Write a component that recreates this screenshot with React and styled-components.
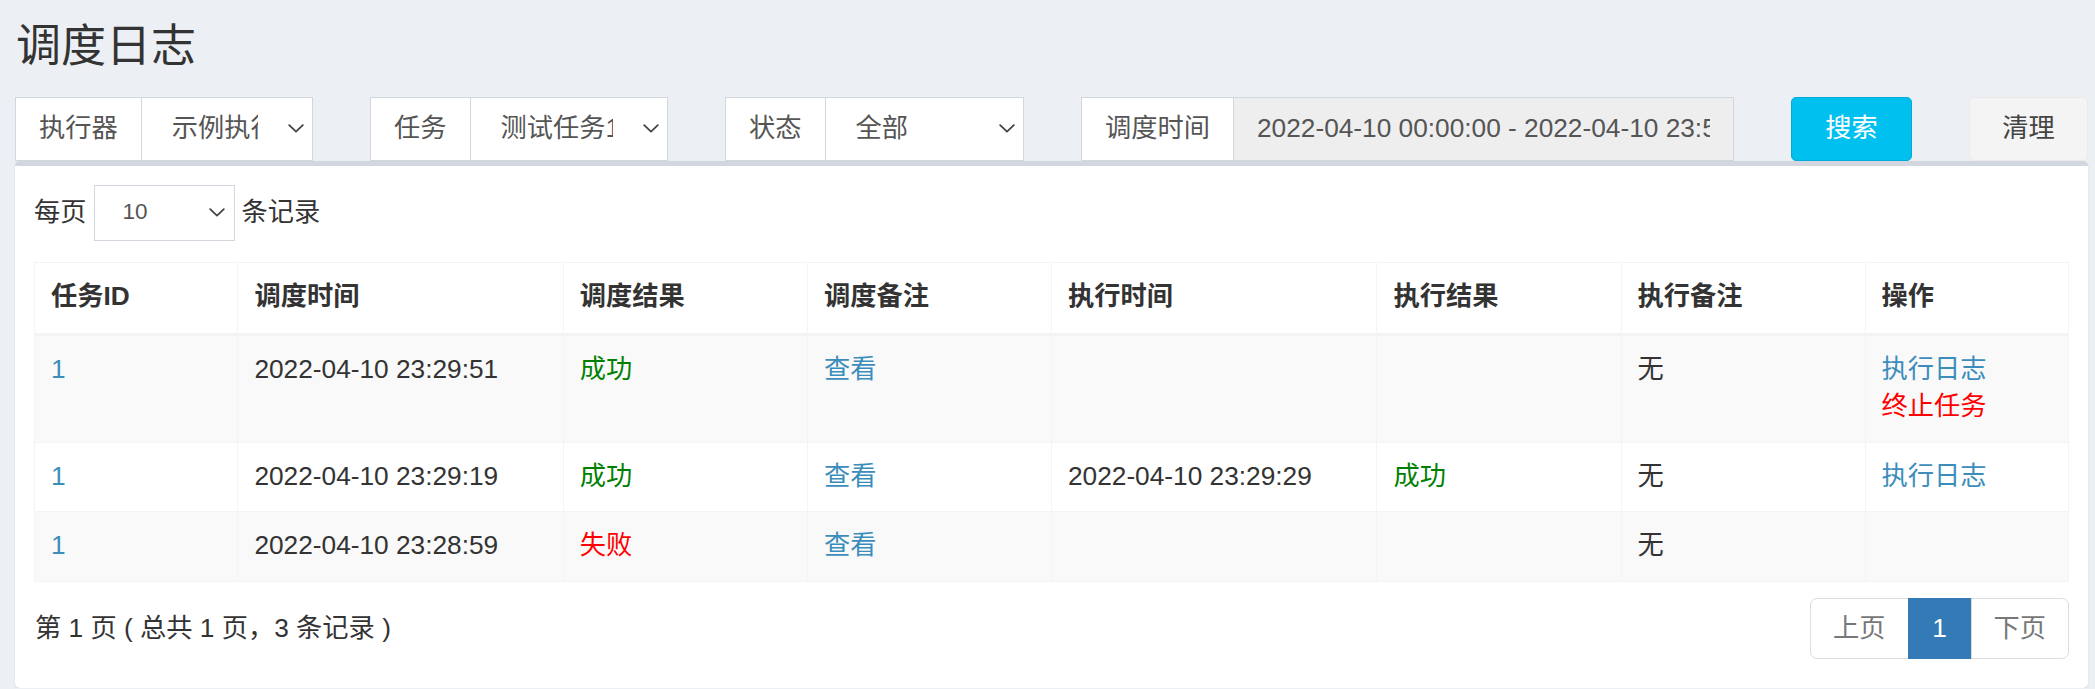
import React from 'react';
import styled, { createGlobalStyle, css } from 'styled-components';

const GlobalStyle = createGlobalStyle`
  html, body { margin: 0; padding: 0; }
  body {
    background: #ecf0f5;
    font-family: "Liberation Sans", "Noto Sans CJK SC", sans-serif;
    font-size: 26.25px;
    line-height: 1.42857;
    color: #333;
    overflow: hidden;
  }
  *, *::before, *::after { box-sizing: border-box; }
`;

const Page = styled.div`
  padding: 22px 7px 0 15px;
`;

const Title = styled.h1`
  margin: 0 0 0 1px;
  font-size: 45px;
  font-weight: 400;
  line-height: 1.1;
  color: #333;
`;

const FilterBar = styled.div`
  display: grid;
  grid-template-columns: 298px 298px 299px 653px 121px 119px;
  column-gap: 57px;
  margin-top: 25px;
`;

const InputGroup = styled.div`
  display: flex;
  height: 64px;
  border: 1px solid #d2d6de;
  background: #fff;
`;

const Addon = styled.span`
  display: flex;
  align-items: center;
  padding: 0 23px;
  border-right: 1px solid #d2d6de;
  color: #555;
  white-space: nowrap;
  background: #fff;
`;

const SelectBox = styled.div`
  flex: 1;
  min-width: 0;
  display: flex;
  align-items: center;
  padding-left: ${p => p.$pad || 30}px;
  color: #555;
  background: #fff;
  font-size: ${p => p.$size || 26.25}px;
`;

const SelectText = styled.span`
  flex: 1;
  min-width: 0;
  overflow: hidden;
  white-space: nowrap;
`;

const CaretWrap = styled.span`
  flex: none;
  width: ${p => p.$w || 54}px;
  display: flex;
  justify-content: flex-end;
  align-items: center;
  padding-right: ${p => p.$right || 8}px;
`;

const DateInput = styled.input`
  flex: 1;
  min-width: 0;
  border: 0;
  background: #eee;
  padding: 0 23px;
  font: inherit;
  color: #555;
  outline: none;
`;

const Button = styled.button`
  height: 64px;
  font: inherit;
  line-height: 1;
  border: 1px solid;
  border-radius: 5px;
  cursor: pointer;
  padding: 0;
  ${p => p.$variant === 'info'
    ? css`background: #00c0ef; border-color: #00acd6; color: #fff;`
    : css`background: #f4f4f4; border-color: #eaeaea; color: #444;`}
`;

const Box = styled.section`
  background: #fff;
  border-top: 5px solid #d2d6de;
  border-radius: 5px;
  box-shadow: 0 1px 2px rgba(0, 0, 0, 0.1);
  padding: 19px 19px 29px;
`;

const LengthRow = styled.div`
  display: flex;
  align-items: center;
  gap: 7px;
  height: 56px;
`;

const SizeSelect = styled.div`
  width: 141px;
  height: 56px;
  display: flex;
  border: 1px solid #d2d6de;
`;

const Table = styled.table`
  width: 100%;
  margin-top: 21px;
  border-collapse: collapse;
  table-layout: fixed;
  border: 1px solid #f4f4f4;
`;

const Th = styled.th`
  border: 1px solid #f4f4f4;
  border-bottom: 3px solid #f4f4f4;
  padding: 15px 16px 18px;
  text-align: left;
  vertical-align: bottom;
  font-weight: 700;
  color: #333;
`;

const Tr = styled.tr`
  background: ${p => (p.$striped ? '#f9f9f9' : '#fff')};
`;

const Td = styled.td`
  border: 1px solid #f4f4f4;
  padding: 15px 16px 16px;
  vertical-align: top;
  color: #333;
`;

const tones = { link: '#3c8dbc', ok: 'green', fail: 'red' };

const Tone = styled.span`
  display: ${p => (p.$block ? 'block' : 'inline')};
  color: ${p => tones[p.$tone]};
  cursor: ${p => (p.$tone === 'link' ? 'pointer' : 'default')};
`;

const Footer = styled.div`
  display: flex;
  justify-content: space-between;
  align-items: center;
  margin-top: 16px;
`;

const Info = styled.div`
  padding-left: 1px;
  white-space: pre;
`;

const Pager = styled.ul`
  display: flex;
  margin: 0;
  padding: 0;
  list-style: none;
`;

const PageItem = styled.li`
  min-width: ${p => p.$min || 0}px;
  text-align: center;
  padding: 11px 22px;
  border: 1px solid ${p => (p.$active ? '#337ab7' : '#ddd')};
  background: ${p => (p.$active ? '#337ab7' : '#fff')};
  color: ${p => (p.$active ? '#fff' : '#777')};
  margin-left: -1px;
  &:first-child { margin-left: 0; border-radius: 7px 0 0 7px; }
  &:last-child { border-radius: 0 7px 7px 0; }
`;

const Chevron = ({ w = 16 }) => (
  <svg width={w} height={9} viewBox="0 0 16 9" fill="none">
    <path d="M1.2 1.2 L8 7.6 L14.8 1.2" stroke="#444" strokeWidth="1.8" strokeLinecap="round" strokeLinejoin="round" />
  </svg>
);

const FilterSelect = ({ label, value }) => (
  <InputGroup>
    <Addon>{label}</Addon>
    <SelectBox>
      <SelectText>{value}</SelectText>
      <CaretWrap><Chevron /></CaretWrap>
    </SelectBox>
  </InputGroup>
);

const rows = [
  { id: '1', time: '2022-04-10 23:29:51', result: ['ok', '成功'], exec: '', execResult: null, ops: ['log', 'stop'] },
  { id: '1', time: '2022-04-10 23:29:19', result: ['ok', '成功'], exec: '2022-04-10 23:29:29', execResult: ['ok', '成功'], ops: ['log'] },
  { id: '1', time: '2022-04-10 23:28:59', result: ['fail', '失败'], exec: '', execResult: null, ops: [] },
];

const widths = ['10%', '16%', '12%', '12%', '16%', '12%', '12%', '10%'];
const heads = ['任务ID', '调度时间', '调度结果', '调度备注', '执行时间', '执行结果', '执行备注', '操作'];

export default function App() {
  return (
    <>
      <GlobalStyle />
      <Page>
        <Title>调度日志</Title>
        <FilterBar>
          <FilterSelect label="执行器" value="示例执行器" />
          <FilterSelect label="任务" value="测试任务1" />
          <FilterSelect label="状态" value="全部" />
          <InputGroup>
            <Addon>调度时间</Addon>
            <DateInput readOnly value="2022-04-10 00:00:00 - 2022-04-10 23:59:59" />
          </InputGroup>
          <Button $variant="info">搜索</Button>
          <Button>清理</Button>
        </FilterBar>
        <Box>
          <LengthRow>
            <span>每页</span>
            <SizeSelect>
              <SelectBox $pad={28} $size={22.5}>
                <SelectText>10</SelectText>
                <CaretWrap $w={40} $right={9}><Chevron /></CaretWrap>
              </SelectBox>
            </SizeSelect>
            <span>条记录</span>
          </LengthRow>
          <Table>
            <colgroup>
              {widths.map((w, i) => <col key={i} style={{ width: w }} />)}
            </colgroup>
            <thead>
              <tr>{heads.map(h => <Th key={h}>{h}</Th>)}</tr>
            </thead>
            <tbody>
              {rows.map((r, i) => (
                <Tr key={i} $striped={i % 2 === 0}>
                  <Td><Tone $tone="link">{r.id}</Tone></Td>
                  <Td>{r.time}</Td>
                  <Td><Tone $tone={r.result[0]}>{r.result[1]}</Tone></Td>
                  <Td><Tone $tone="link">查看</Tone></Td>
                  <Td>{r.exec}</Td>
                  <Td>{r.execResult && <Tone $tone={r.execResult[0]}>{r.execResult[1]}</Tone>}</Td>
                  <Td>无</Td>
                  <Td>
                    {r.ops.includes('log') && <Tone $tone="link" $block>执行日志</Tone>}
                    {r.ops.includes('stop') && <Tone $tone="fail" $block>终止任务</Tone>}
                  </Td>
                </Tr>
              ))}
            </tbody>
          </Table>
          <Footer>
            <Info>第 1 页 ( 总共 1 页，3 条记录 )</Info>
            <Pager>
              <PageItem>上页</PageItem>
              <PageItem $active $min={64}>1</PageItem>
              <PageItem>下页</PageItem>
            </Pager>
          </Footer>
        </Box>
      </Page>
    </>
  );
}
